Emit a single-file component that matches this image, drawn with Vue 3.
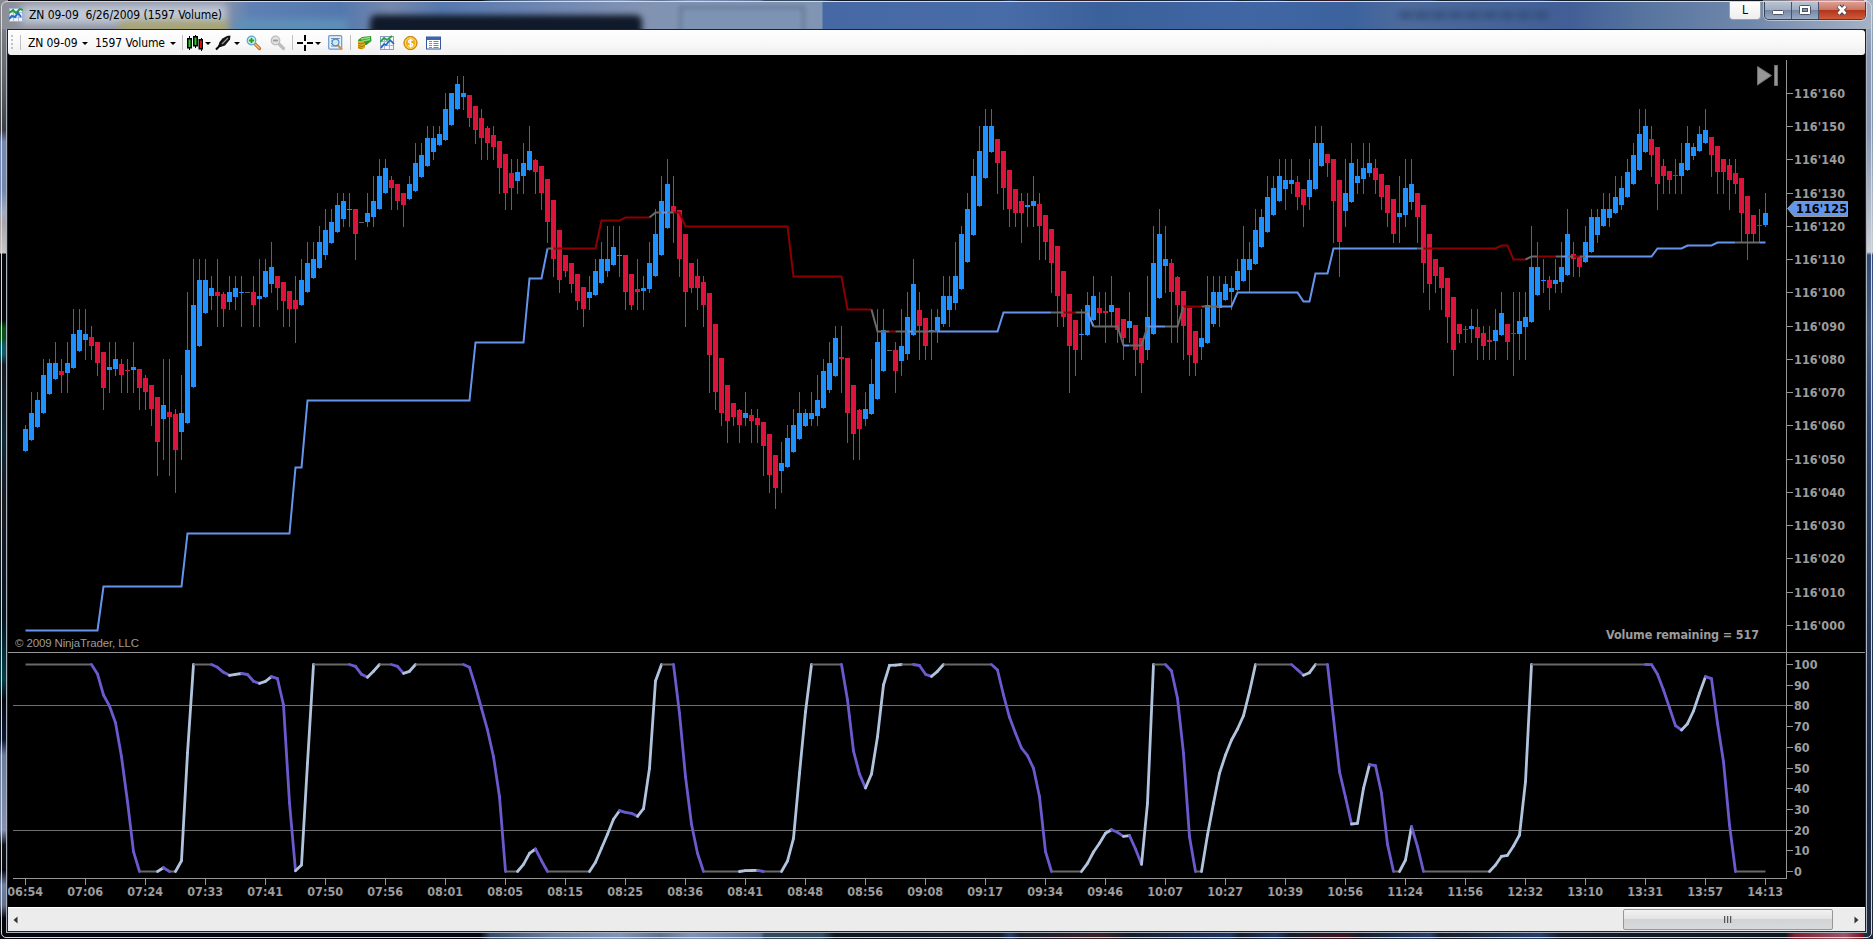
<template>
  <div class="window">
    <header class="titlebar">
      <div class="glass" aria-hidden="true">
        <span class="smudge glow"></span>
        <span class="smudge yellow"></span>
        <span class="smudge sky"></span>
        <span class="smudge dark"></span>
        <span class="smudge pane"></span>
        <span class="smudge ghost"></span>
      </div>
      <svg class="app-icon" width="14" height="14" viewBox="0 0 14 14">
        <rect x=".5" y=".5" width="13" height="13" fill="#eef0fa" stroke="#a9b0d8" />
        <path d="M4.5 1v12M9.5 1v12M1 4.5h12M1 9.5h12" stroke="#b4badf" />
        <path d="M0 5l4-3 3 3 4-4 3 1" fill="none" stroke="#24a03a" stroke-width="2" />
        <path d="M0 11l3-3 3 1 3-4 3 4" fill="none" stroke="#2470c8" stroke-width="2" />
      </svg>
      <h1>ZN 09-09&nbsp; 6/26/2009 (1597 Volume)</h1>
      <div class="window-buttons">
        <button class="link-button" type="button">L</button>
        <div class="caption-buttons">
          <button type="button" aria-label="Minimize">
            <svg width="14" height="12" viewBox="0 0 14 12"><rect x="1.5" y="6.5" width="11" height="4" rx="1" fill="#fff" stroke="#4c5568" /></svg>
          </button>
          <button type="button" aria-label="Maximize">
            <svg width="14" height="12" viewBox="0 0 14 12">
              <rect x="1.5" y="1.500" width="11" height="9" rx="1" fill="#fff" stroke="#4c5568" />
              <rect x="4.5" y="4.500" width="5" height="3" fill="#8494ad" stroke="#4c5568" />
            </svg>
          </button>
          <button class="close" type="button" aria-label="Close">
            <svg width="14" height="12" viewBox="0 0 14 12">
              <path d="M3.500 2l7 8M10.500 2l-7 8" stroke="#4c4450" stroke-width="4.800" />
              <path d="M3.500 2.300l7 7.400M10.500 2.300l-7 7.400" stroke="#fff" stroke-width="2.800" />
            </svg>
          </button>
        </div>
      </div>
    </header>

    <div class="client">
      <nav class="toolbar">
        <span class="grip"></span>
        <span class="sep"></span>
        <span class="label">ZN 09-09</span>
        <span class="caret"></span>
        <span class="label">1597 Volume</span>
        <span class="caret"></span>
        <span class="sep"></span>
        <svg width="16" height="16" viewBox="0 0 16 16">
          <path d="M2.5 1v14M8.500 0v13M14.500 3v13" stroke="#000" />
          <rect x=".75" y="3.750" width="3.500" height="9" fill="#18d818" stroke="#000" stroke-width="1.500" />
          <rect x="6.750" y="1.750" width="3.500" height="9" fill="#18d818" stroke="#000" stroke-width="1.500" />
          <rect x="12.250" y="4.750" width="3.300" height="9" fill="#e01010" stroke="#000" stroke-width="1.500" />
        </svg>
        <span class="caret"></span>
        <svg width="17" height="16" viewBox="0 0 17 16">
          <path d="M3 12l1.500-5 3-3.500L12 1l3.500-.5-.5 4-5 6-4.500 1.500z" fill="#111" />
          <path d="M7 9l6-6" stroke="#9a9a9a" stroke-width="1.200" />
          <path d="M1 14.500l4-4" stroke="#000" stroke-width="2" />
        </svg>
        <span class="caret"></span>
        <svg class="pad" width="16" height="16" viewBox="0 0 16 16">
          <path d="M8.500 8.500l5 5" stroke="#c97328" stroke-width="3.200" stroke-linecap="round" />
          <path d="M9 9l4.500 4.500" stroke="#f6bd85" stroke-width="1.300" />
          <circle cx="5.500" cy="5.500" r="4.300" fill="#d9f3f7" stroke="#55a9cf" stroke-width="1.200" />
          <path d="M5.500 2.800v5.400M2.800 5.500h5.400" stroke="#2c9d2c" stroke-width="1.900" />
        </svg>
        <svg class="pad" width="16" height="16" viewBox="0 0 16 16">
          <path d="M8.500 8.500l5 5" stroke="#bdbdbd" stroke-width="3.200" stroke-linecap="round" />
          <circle cx="5.500" cy="5.500" r="4.300" fill="#e2e2e2" stroke="#bcbcbc" stroke-width="1.200" />
          <path d="M3 5.500h5" stroke="#9a9a9a" stroke-width="1.800" />
        </svg>
        <span class="sep"></span>
        <svg width="16" height="16" viewBox="0 0 16 16">
          <path d="M8 0v6M8 10v6M0 8h6M10 8h6" stroke="#000" stroke-width="2" />
        </svg>
        <span class="caret"></span>
        <svg class="pad" width="16" height="16" viewBox="0 0 16 16">
          <rect x=".7" y=".7" width="13" height="13.500" rx="1" fill="#e4f0fc" stroke="#6b9bd0" stroke-width="1.200" />
          <path d="M3 3.500h9M3 6h8M3 8.500h8M3 11h6" stroke="#6d8fb5" />
          <path d="M9.500 10l4.500 4.500" stroke="#e58a3c" stroke-width="2.200" />
          <circle cx="7.500" cy="7.500" r="3.400" fill="#c9e8f8" stroke="#5f8bb8" stroke-width="1.200" />
        </svg>
        <span class="sep"></span>
        <svg class="pad" width="16" height="16" viewBox="0 0 16 16">
          <path d="M1 5l4-3 9-1 .5 5-5 4-7 0z" fill="#2d9a2a" />
          <path d="M4 4l9-1.500M4 6.500l9-2" stroke="#8fdc80" stroke-width="1.300" />
          <path d="M1 6h4l3 2v5l-3 1.500-4-1z" fill="#e5ad20" />
          <path d="M1 8l3 1 4-1.500M1 10.500l4 1 3-1M1 12.500l4 1" fill="none" stroke="#9c7414" />
        </svg>
        <svg class="pad" width="16" height="16" viewBox="0 0 16 16">
          <rect x=".5" y="1.500" width="13" height="13" fill="#f2f4fc" stroke="#8f9dcc" />
          <path d="M4.500 2v12M9.500 2v12M1 6.500h12M1 10.500h12" stroke="#a9b3dc" />
          <path d="M0 7l4-4 3 2 5-4" fill="none" stroke="#28a33b" stroke-width="1.800" />
          <path d="M1 13l3-4 2 1 4-5 4 4" fill="none" stroke="#246ab8" stroke-width="1.700" />
        </svg>
        <svg class="pad" width="16" height="16" viewBox="0 0 16 16">
          <circle cx="7.500" cy="8" r="6.600" fill="#f0ae10" stroke="#ba7808" />
          <circle cx="7.500" cy="8" r="5.200" fill="none" stroke="#ffdf72" />
          <path d="M9.800 5.600c-1-1-4.300-1-4.300.8 0 2.200 4.400 1.200 4.400 3.400 0 1.800-3.600 1.800-4.700.6M7.500 3.800v8.600" fill="none" stroke="#fff" stroke-width="1.400" />
        </svg>
        <svg class="pad" width="16" height="16" viewBox="0 0 16 16">
          <rect x=".5" y="2" width="14" height="12" fill="#fff" stroke="#33589c" />
          <path d="M1 3.500h13" stroke="#3c66b4" stroke-width="3" />
          <path d="M3 6.500h3M3 8.500h3M3 10.500h3M3 12.500h3" stroke="#7f8da5" />
          <path d="M7.500 6.500h5M7.500 8.500h5M7.500 10.500h5M7.500 12.500h5" stroke="#5e86c8" />
        </svg>
      </nav>

      <svg class="chart" width="1857" height="852" viewBox="8 55 1857 852">
        <!-- candles -->
        <g shape-rendering="crispEdges">
          <template v-for="(c, i) in candles" :key="i">
            <rect class="wick" :x="c.x + 2" :y="c.high" width="1" :height="c.low - c.high" />
            <rect :class="c.kind" :x="c.x" :y="c.top" width="5" :height="c.bottom - c.top" />
          </template>
        </g>

        <!-- trend line -->
        <polyline v-for="(s, i) in trend" :key="'t' + i" :class="['trend', s.color]" :points="s.points" />

        <!-- oscillator -->
        <path class="level" d="M13 705.5H1786M13 830.5H1786" />
        <line v-for="(s, i) in oscillator" :key="'o' + i" :class="['osc', s.dir]" :x1="s.x1" :y1="s.y1" :x2="s.x2" :y2="s.y2" />

        <!-- axes -->
        <path class="axis" d="M8 652.5H1865M1786.5 60V879M13 878.5H1787" />
        <g v-for="t in priceTicks" :key="t.label">
          <line class="axis" x1="1787" :y1="t.y" x2="1793" :y2="t.y" />
          <text x="1794" :y="t.y + 4.500" textLength="51">{{ t.label }}</text>
        </g>
        <g v-for="t in oscTicks" :key="'l' + t.label">
          <line class="axis" x1="1787" :y1="t.y" x2="1793" :y2="t.y" />
          <text x="1794" :y="t.y + 4.500">{{ t.label }}</text>
        </g>
        <g v-for="(label, i) in times" :key="label">
          <line class="axis" :x1="25.500 + i * 60" y1="879" :x2="25.500 + i * 60" y2="885" />
          <text :x="7.200 + i * 60" y="896" textLength="36">{{ label }}</text>
        </g>

        <polygon class="marker" points="1787.5,208.5 1794,201.5 1847.5,201.5 1847.5,216.5 1794,216.5" />
        <text class="marker-text" x="1796" y="213" textLength="51">116'125</text>

        <path d="M1757.5 66.500V85L1771.500 75.500Z" fill="#969696" stroke="#6e6e6e" />
        <rect x="1774.500" y="65.500" width="3" height="20" fill="#969696" stroke="#6e6e6e" />

        <text x="1606" y="639" textLength="153">Volume remaining = 517</text>
        <text class="copyright" x="15" y="647" textLength="124">© 2009 NinjaTrader, LLC</text>
      </svg>

      <div class="scrollbar">
        <svg width="16" height="10" viewBox="0 0 16 10"><path d="M9.500 1.500v7L5.500 5z" fill="#333" /></svg>
        <div class="track">
          <div class="thumb"><i></i><i></i><i></i></div>
        </div>
        <svg width="16" height="10" viewBox="0 0 16 10"><path d="M5.500 1.500v7l4-3.500z" fill="#333" /></svg>
      </div>
    </div>
  </div>
</template>

<script setup>
// one bar per entry: u = up, d = down, n = unchanged, then high, body top, body bottom, low
const bars = `
u425,429,451,452 u392,413,440,441 u392,400,427,428 u359,375,413,414 u359,363,394,395
u342,363,379,380 d359,371,375,393 u342,363,373,393 u309,334,368,369 u309,330,351,352
u309,334,340,360 d326,337,346,360 d342,342,363,376 d352,352,388,410 u342,367,370,393
u342,359,369,376 d359,364,375,393 d359,370,371,393 u342,367,370,393 d369,369,388,410
d375,378,392,410 d385,385,409,426 d397,397,442,476 u359,405,419,460 d359,412,417,476
d409,414,450,493 u375,413,432,460 u292,350,423,424 u259,305,387,388 u259,280,346,347
u259,280,313,314 u276,288,296,310 d259,292,296,327 d292,294,309,327 u276,292,302,310
u276,288,297,310 u276,292,293,327 n292,292,293,293 d276,292,305,327 u259,296,299,327
u259,271,297,298 u242,267,284,293 d276,276,288,310 d282,282,301,327 d291,291,309,327
d276,300,309,343 u259,280,305,306 u242,263,292,293 u242,259,278,279 u226,242,268,269
u209,230,255,260 u209,222,243,244 u193,205,232,233 u193,201,219,227 u193,209,210,227
d209,209,234,260 n222,222,223,223 u193,213,222,227 u176,201,217,227 u159,176,209,210
u159,168,193,194 d176,180,188,210 d184,184,201,210 d193,193,205,227 u176,184,199,200
u143,163,191,192 u143,155,177,178 u126,138,166,167 u126,138,152,160 u126,134,145,146
u93,109,140,141 u93,93,125,126 u76,84,109,110 u76,93,97,110 d95,95,118,127
d106,106,130,144 d109,118,138,160 d126,128,143,160 d126,135,147,160 d141,141,168,194
d154,154,193,210 d159,173,188,210 u159,172,181,194 u143,163,176,194 u126,151,170,171
d159,160,172,194 d166,166,193,210 d179,179,222,243 d200,200,259,277 d230,230,280,293
d255,255,271,277 d263,263,284,293 d274,274,301,310 d287,287,309,327 u276,292,298,310
u259,271,295,296 u242,259,283,284 u226,259,271,277 u226,247,265,266 u226,255,256,277
d255,255,292,310 d274,274,305,310 d259,289,292,310 u276,288,291,310 u242,263,289,293
u209,234,276,277 u176,201,255,256 u159,184,228,229 d176,206,212,243 d210,210,259,277
d234,234,292,327 d263,263,288,293 d259,276,288,310 d276,282,305,327 d293,293,355,393
d324,324,392,410 d358,358,413,426 d385,385,421,443 d403,403,417,426 d409,410,425,443
u392,413,418,426 d409,415,421,443 d409,418,425,443 d422,422,446,476 d434,434,475,493
d455,455,488,509 u442,463,471,493 u425,438,467,468 u409,425,452,453 u392,413,439,440
u409,413,426,427 u392,413,419,426 u375,400,416,426 u359,371,408,409 u342,363,390,393
u326,338,376,377 d326,357,359,393 d358,358,413,443 d385,385,434,460 d409,410,429,460
u392,409,419,426 u359,384,414,415 u309,342,399,400 u309,330,371,372 n350,350,351,351
d342,350,371,393 u309,346,361,376 u292,317,354,360 u259,284,335,336 d292,310,326,360
d318,318,346,360 u309,330,331,360 u309,317,331,343 u276,296,324,327 u276,296,310,327
u242,276,303,310 u226,234,289,290 u193,209,262,263 u159,176,235,236 u126,151,206,207
u109,126,178,179 u109,126,152,153 d139,139,163,194 d151,151,188,210 d170,170,209,227
d189,189,213,227 d193,201,213,243 u193,205,207,227 u176,201,206,227 d193,204,226,260
d215,215,242,260 d229,229,263,293 d246,246,296,327 d271,271,317,327 d294,294,346,393
d320,320,350,376 u309,334,335,360 u292,305,335,336 u276,296,320,321 d292,308,313,326
d292,311,313,343 u276,305,312,326 d308,308,330,343 d319,319,338,360 u292,321,328,343
d325,325,350,376 d338,338,363,393 u276,317,350,360 u226,263,334,335 u209,234,298,299
u226,259,266,293 d259,263,292,343 d276,277,305,343 d291,291,326,360 d308,308,355,376
d331,331,363,376 u309,338,347,360 u276,305,343,344 u276,292,324,327 u276,292,308,327
u276,284,300,301 u276,288,292,310 u259,271,290,291 u226,259,281,282 u242,259,270,293
u209,230,264,265 u209,217,247,248 u176,197,232,233 u176,188,215,216 u159,176,201,202
u159,180,189,210 u159,180,184,194 d176,182,197,210 d189,189,205,227 u159,180,197,210
u126,143,189,190 u126,143,166,167 d154,154,163,177 d159,159,201,243 d180,180,242,277
u159,193,211,227 u143,163,202,203 u159,176,183,194 u143,168,179,194 u143,163,173,177
d159,168,180,194 d174,174,197,210 d185,185,213,227 d199,199,234,243 u176,213,217,243
u159,188,215,227 u159,184,202,210 d193,193,217,243 d205,205,263,293 d234,234,284,310
d259,259,276,293 d267,267,288,310 d278,278,317,343 d297,297,350,376 d324,324,334,343
d326,329,330,343 u309,326,329,343 d309,327,338,360 d326,333,346,360 d326,340,342,360
u309,330,341,360 u292,313,335,336 d324,324,342,360 d292,333,334,376 u292,321,334,360
u292,317,327,360 u226,267,322,323 u242,267,295,296 u259,280,281,293 d276,280,288,310
u259,280,284,293 u242,267,282,293 u209,234,275,276 d242,254,259,277 d257,257,267,277
u226,242,262,263 u209,217,252,253 u209,217,235,243 u193,209,226,227 u193,209,218,227
u176,197,213,214 u176,188,205,210 u159,172,197,198 u143,155,184,185 u109,134,170,171
u109,126,152,153 d126,139,155,177 d147,147,184,210 d159,166,176,194 d171,171,180,194
d159,175,176,194 u143,163,176,194 u126,143,170,171 u143,147,156,160 u126,134,151,152
u109,130,143,144 d137,137,155,177 d146,146,172,194 d159,159,172,194 d159,165,180,210
d159,173,184,194 d178,178,213,243 d196,196,234,260 d215,215,234,243 d209,225,226,243
u193,213,225,227`

const kinds = { u: 'up', d: 'down', n: 'wick' }

const candles = bars.trim().split(/\s+/).map((bar, i) => {
  const [high, top, bottom, low] = bar.slice(1).split(',').map(Number)
  return { kind: kinds[bar[0]], x: 23 + i * 6, high, top, bottom, low }
})

const barX = i => 25.5 + i * 6

// [color, bar, y, bar, y, ...]
const trend = [
  ['blue', 0, 630, 12, 630, 13, 586, 26, 586, 27, 533, 44, 533, 45, 467, 46, 467, 47, 400, 74, 400, 75, 342, 83, 342, 84, 278, 86, 278, 87, 248],
  ['gray', 87, 248, 88, 248],
  ['red', 88, 248, 95, 248, 96, 220, 99, 220, 100, 217, 104, 217],
  ['gray', 104, 217, 105, 212, 106, 212],
  ['blue', 106, 212, 107, 212],
  ['gray', 107, 212, 108, 212],
  ['red', 108, 212, 109, 212, 110, 226, 127, 226, 128, 276, 136, 276, 137, 309, 141, 309],
  ['gray', 141, 309, 142, 331, 144, 331],
  ['red', 144, 331, 145, 331],
  ['gray', 145, 331, 147, 331],
  ['blue', 147, 331, 148, 331],
  ['gray', 148, 331, 152, 331],
  ['blue', 152, 331, 162, 331, 163, 312, 171, 312],
  ['gray', 171, 312, 173, 312],
  ['red', 173, 312, 175, 312],
  ['gray', 175, 312, 177, 312],
  ['blue', 177, 312, 178, 326],
  ['gray', 178, 326, 182, 326, 183, 345],
  ['blue', 183, 345, 184, 345],
  ['gray', 184, 345, 186, 345, 187, 326],
  ['blue', 187, 326, 190, 326],
  ['gray', 190, 326, 192, 326, 193, 306],
  ['red', 193, 306, 196, 306],
  ['gray', 196, 306, 199, 306],
  ['blue', 199, 306, 201, 306, 202, 292, 212, 292, 213, 301, 214, 301, 215, 273, 217, 273, 218, 248, 232, 248],
  ['gray', 232, 248, 233, 248],
  ['red', 233, 248, 245, 248, 246, 245, 247, 245, 248, 259, 250, 259],
  ['gray', 250, 259, 251, 256, 252, 256],
  ['red', 252, 256, 255, 256],
  ['gray', 255, 256, 256, 256],
  ['blue', 256, 256, 257, 256],
  ['gray', 257, 256, 258, 256],
  ['red', 258, 256, 259, 256],
  ['gray', 259, 256, 260, 256],
  ['blue', 260, 256, 271, 256, 272, 248, 276, 248, 277, 245, 281, 245, 282, 242, 285, 242],
  ['gray', 285, 242, 289, 242],
  ['blue', 289, 242, 290, 242]
].map(([color, ...values]) => {
  const points = []
  for (let i = 0; i < values.length; i += 2) {
    points.push(`${barX(values[i])},${values[i + 1] + 0.5}`)
  }
  return { color, points: points.join(' ') }
})

const TOP = 664.5
const BOTTOM = 871.5

const oscPoints = [
  [0, TOP], [11, TOP], [12, 674], [13, 695], [14, 706], [15, 722.7], [16, 756.7], [17, 801.7], [18, 851.7], [19, BOTTOM],
  [22, BOTTOM], [23, 867.7], [24, BOTTOM], [25, BOTTOM], [26, 860.7], [27, 753], [28, TOP], [31, TOP], [32, 667.3],
  [33, 672.3], [34, 675.3], [35, 674.3], [36, 673.5], [37, 674.5], [38, 681.3], [39, 683.3], [40, 681.3], [41, 676.7],
  [42, 678.7], [43, 705], [44, 803], [45, 870.7], [46, 865], [47, 763], [48, TOP], [54, TOP], [55, 666.3], [56, 674.3],
  [57, 677.3], [58, 671.3], [59, TOP], [61, TOP], [62, 666.3], [63, 673.3], [64, 671.3], [65, TOP], [73, TOP],
  [74, 667.3], [75, 686.7], [76, 708.3], [77, 730], [78, 756.7], [79, 796.7], [80, BOTTOM], [82, BOTTOM], [83, 864.3],
  [84, 853.3], [85, 849], [86, 860.7], [87, BOTTOM], [94, BOTTOM], [95, 862.3], [96, 848.3], [97, 834.3], [98, 819.3],
  [99, 810.7], [100, 812.3], [101, 813.3], [102, 816.3], [103, 808.7], [104, 768.3], [105, 681], [106, TOP], [108, TOP],
  [109, 713.3], [110, 776.7], [111, 824.3], [112, 853.3], [113, BOTTOM], [119, BOTTOM], [120, 870.6], [121, 870.5],
  [122, 870.4], [123, BOTTOM], [126, BOTTOM], [127, 861], [128, 838.3], [129, 773.3], [130, 711.7], [131, TOP],
  [136, TOP], [137, 700], [138, 751], [139, 774], [140, 788], [141, 774], [142, 736.7], [143, 685], [144, 665.3],
  [145, 665.2], [146, TOP], [148, TOP], [149, 665.5], [150, 674.3], [151, 676.3], [152, 671.3], [153, TOP], [161, TOP],
  [162, 670], [163, 695], [164, 717.3], [165, 733.3], [166, 748], [167, 755.7], [168, 768.3], [169, 796.7],
  [170, 851.7], [171, BOTTOM], [176, BOTTOM], [177, 863.3], [178, 852], [179, 843.3], [180, 833.3], [181, 829.7],
  [182, 832.3], [183, 836.3], [184, 835.7], [185, 849], [186, 864.3], [187, 803.3], [188, TOP], [190, TOP], [191, 671],
  [192, 698.3], [193, 753.3], [194, 836.7], [195, BOTTOM], [196, BOTTOM], [197, 835], [198, 803.3], [199, 773.3],
  [200, 755], [201, 740], [202, 729], [203, 715.7], [204, 691.7], [205, TOP], [211, TOP], [212, 669.7], [213, 675.3],
  [214, 672.7], [215, TOP], [217, TOP], [218, 718.3], [219, 771.7], [220, 797.3], [221, 824], [222, 823.3],
  [223, 788.3], [224, 764.7], [225, 765.7], [226, 793.3], [227, 844.3], [228, BOTTOM], [229, BOTTOM], [230, 860],
  [231, 826.7], [232, 846.7], [233, BOTTOM], [244, BOTTOM], [245, 865], [246, 856.3], [247, 855.3], [248, 846],
  [249, 835], [250, 781.7], [251, TOP], [270, TOP], [271, 664.6], [272, 674.3], [273, 690], [274, 707.7], [275, 725.7],
  [276, 730], [277, 723.7], [278, 711], [279, 693.3], [280, 676.7], [281, 678.7], [282, 723.3], [283, 761.7],
  [284, 825], [285, BOTTOM], [290, BOTTOM]
]

const oscillator = oscPoints.slice(1).map(([bar, y], i) => {
  const [prevBar, prevY] = oscPoints[i]
  const dir = y === prevY ? 'flat' : y < prevY ? 'rising' : 'falling'
  return { dir, x1: barX(prevBar), y1: prevY, x2: barX(bar), y2: y }
})

const priceTicks = Array.from({ length: 17 }, (_, i) => ({
  label: `116'${String(160 - i * 10).padStart(3, '0')}`,
  y: Math.round(92.8 + i * 33.25) + 0.5
}))

const oscTicks = Array.from({ length: 11 }, (_, i) => ({
  label: 100 - i * 10,
  y: Math.round(664 + i * 20.7) + 0.5
}))

const times = [
  '06:54', '07:06', '07:24', '07:33', '07:41', '07:50', '07:56', '08:01', '08:05', '08:15',
  '08:25', '08:36', '08:41', '08:48', '08:56', '09:08', '09:17', '09:34', '09:46', '10:07',
  '10:27', '10:39', '10:56', '11:24', '11:56', '12:32', '13:10', '13:31', '13:57', '14:13'
]
</script>

<style>
body {
  margin: 0;
  background: #000;
  overflow: hidden;
}
</style>

<style scoped>
.window {
  position: relative;
  box-sizing: border-box;
  width: 1873px;
  height: 939px;
  padding: 1px 2px 1px 1px;
  display: flex;
  flex-direction: column;
  font-family: "DejaVu Sans Condensed", "DejaVu Sans", sans-serif;
  font-stretch: condensed;
  font-size: 12px;
  background:
    linear-gradient(#a8b4c6 0, #8595b2 60px, #8798b4 130px, #b8c0cc 220px, #ccd0d6 252px, #304a75 255px, #4b6288 330px, #304a75 420px, #223452 640px, #1a2b48 800px, #202a3c 939px) right 0 / 9px 100% no-repeat,
    linear-gradient(#8b8d92 0, #606468 80px, #3d3f44 130px, #7488b2 142px, #7386ae 190px, #a2abc0 212px, #aaa4a8 222px, #c8c4c4 253px, #06070b 254px, #06070b 320px, #0a5018 328px, #0a5018 338px, #0c5c68 346px, #0c5c68 354px, #17191f 365px, #102a34 440px, #191a20 500px, #05161f 620px, #043f45 680px, #07080f 700px, #0c1830 740px, #6c7b9a 755px, #8492ae 830px, #101218 845px, #08090f 870px, #7080a0 885px, #65728c 905px, #05070d 918px) left 0 / 8px 100% no-repeat,
    linear-gradient(90deg, #05070c 480px, #364a64 490px, #6a7c9c 552px, #8094b8 620px, #62708c 660px, #8094b8 690px, #5e7092 760px, #34485e 765px, #34485e 822px, #10161e 835px, #161d28 1000px, #263a64 1010px, #161d28 1020px, #3c2028 1100px, #161d28 1130px, #1f3460 1230px, #161d28 1240px, #1f3460 1275px, #161d28 1290px, #3c1420 1342px, #161d28 1360px, #283c68 1430px, #161d28 1440px, #283c68 1540px, #161d28 1560px, #10161e 1785px, #7c2230 1795px, #9a5464 1845px, #7c1420 1862px, #17202e 1870px);
}

.window::after {
  content: '';
  position: absolute;
  inset: 1px;
  border: 1px solid #d5dae2;
  border-radius: 6px 6px 5px 5px;
  pointer-events: none;
}

.titlebar {
  position: relative;
  flex: none;
  height: 28px;
  display: flex;
  align-items: flex-start;
  padding-left: 8px;
  border-radius: 6px 6px 0 0;
  background: linear-gradient(90deg, #8d8f98 0, #8d95a8 220px, #5e80b4 250px, #5478ae 340px, #7588ac 390px, #5678ae 440px, #7289b2 560px, #8293b2 640px, #8094b4 821px, #4669a5 822px, #486ca8 1000px, #3b619c 1100px, #4067a4 1250px, #3c629e 1350px, #4d6b9c 1400px, #415f96 1570px, #56749f 1640px, #7188ac 1750px, #a6b2c4 1870px);
}

.glass {
  position: absolute;
  inset: 0;
  overflow: hidden;
  border-radius: 6px 6px 0 0;
}

.smudge {
  position: absolute;
  filter: blur(4px);
}

.smudge.glow {
  left: 20px;
  top: 4px;
  width: 205px;
  height: 19px;
  background: #c0c9d8;
}

.smudge.yellow {
  left: 118px;
  top: 20px;
  width: 110px;
  height: 12px;
  background: #aaa56e;
}

.smudge.sky {
  left: 232px;
  top: 18px;
  width: 115px;
  height: 14px;
  background: #5f91b8;
}

.smudge.dark {
  left: 369px;
  top: 14px;
  width: 272px;
  height: 24px;
  border-radius: 6px;
  background: #101929;
  filter: blur(3px);
}

.smudge.pane {
  left: 678px;
  top: 5px;
  width: 120px;
  height: 28px;
  border: 3px solid #687a98;
  background: #7d93b3;
  filter: blur(2px);
}

.smudge.ghost {
  left: 1398px;
  top: 11px;
  width: 152px;
  height: 6px;
  background: repeating-linear-gradient(90deg, #2f4a76 0 12px, #3f5b8b 12px 17px);
  filter: blur(3.500px);
}

.app-icon {
  position: relative;
  margin-top: 7px;
}

h1 {
  position: relative;
  margin: 5px 0 0 6px;
  width: 200px;
  font-size: 12px;
  font-weight: 400;
  line-height: 18px;
  letter-spacing: -0.07px;
  white-space: nowrap;
  color: #000;
}

.window-buttons {
  position: relative;
  display: flex;
  margin-left: auto;
  margin-right: 5px;
  gap: 3px;
}

button {
  font-family: inherit;
  padding: 0;
}

.link-button {
  box-sizing: border-box;
  width: 32px;
  height: 19px;
  border: 1px solid #9ba1ac;
  border-top: 0;
  border-radius: 0 0 4px 4px;
  background: linear-gradient(#fff, #eee);
  font-size: 12px;
}

.caption-buttons {
  box-sizing: border-box;
  display: flex;
  width: 102px;
  height: 19px;
  border: 1px solid #384254;
  border-top: 0;
  border-radius: 0 0 5px 5px;
  box-shadow: 0 0 0 1px rgba(255, 255, 255, 0.45);
  overflow: hidden;
}

.caption-buttons button {
  display: flex;
  align-items: center;
  justify-content: center;
  width: 27px;
  border: 0;
  border-right: 1px solid #46526a;
  background: linear-gradient(#bcc5d4 0, #a0adc2 48%, #7486a3 50%, #9aabc3 100%);
}

.caption-buttons button.close {
  flex: 1;
  border-right: 0;
  background: linear-gradient(#dfa498 0, #cb7562 48%, #b0341c 50%, #d05a38 100%);
}

.client {
  flex: none;
  width: 1857px;
  height: 901px;
  margin-left: 6px;
  border: 1px solid #1d2430;
  outline: 1px solid #abb4c0;
  display: flex;
  flex-direction: column;
  background: #000;
}

.toolbar {
  flex: none;
  height: 25px;
  display: grid;
  grid-template-columns: 12px 8px 52px 15px 73px 14px 5px 16px 12px 17px 12px 24px 24px 5px 16px 13px 24px 5px 23px 23px 23px 23px;
  align-items: center;
  border-radius: 0 3px 3px 3px;
  background: linear-gradient(#fefefe, #f9f9f9 50%, #efefef);
}

.grip {
  width: 2px;
  height: 15px;
  margin-left: 3px;
  background: repeating-linear-gradient(#c2c2c2 0 2px, transparent 2px 4px);
}

.sep {
  width: 1px;
  height: 15px;
  background: #c0c0c0;
}

.label {
  white-space: nowrap;
  letter-spacing: -0.1px;
}

.caret {
  width: 0;
  margin: 2px 0 0 2px;
  border: 3px solid transparent;
  border-top-color: #000;
  border-bottom: 0;
}

.pad {
  margin-left: 2px;
}

.chart {
  flex: none;
  display: block;
}

.wick {
  fill: #626262;
}

.up {
  fill: #1e90ff;
}

.down {
  fill: #dc143c;
}

.trend {
  fill: none;
  stroke-width: 2;
}

.trend.blue {
  stroke: #6495ed;
}

.trend.gray {
  stroke: #696969;
}

.trend.red {
  stroke: #8b0000;
}

.level {
  stroke: #6f6f6f;
}

.osc {
  stroke-width: 2.8;
  stroke-linecap: round;
}

.osc.flat {
  stroke: #696969;
  stroke-width: 2;
  stroke-linecap: butt;
}

.osc.rising {
  stroke: #b0c4de;
}

.osc.falling {
  stroke: #6a5acd;
}

.axis {
  fill: none;
  stroke: #969696;
}

text {
  fill: #9c9c9c;
  font-size: 12.5px;
  font-weight: 700;
}

.marker {
  fill: #6495ed;
  stroke: #999;
}

.marker-text {
  fill: #000;
}

.copyright {
  font-family: "Liberation Sans", Arial, sans-serif;
  font-size: 11.5px;
  font-weight: 400;
}

.scrollbar {
  flex: none;
  box-sizing: border-box;
  height: 24px;
  display: flex;
  align-items: center;
  border-top: 1px solid #fff;
  background: #ececec;
}

.track {
  flex: 1;
  height: 21px;
  display: flex;
  justify-content: flex-end;
  padding-right: 16px;
}

.thumb {
  box-sizing: border-box;
  width: 210px;
  border: 1px solid #979797;
  border-radius: 2px;
  display: flex;
  align-items: center;
  justify-content: center;
  gap: 1px;
  background: linear-gradient(#f2f2f2 0, #e4e4e5 45%, #d2d3d5 50%, #d8d9da 100%);
}

.thumb i {
  width: 2px;
  height: 7px;
  background: linear-gradient(90deg, #555 50%, #bbb 50%);
}
</style>
